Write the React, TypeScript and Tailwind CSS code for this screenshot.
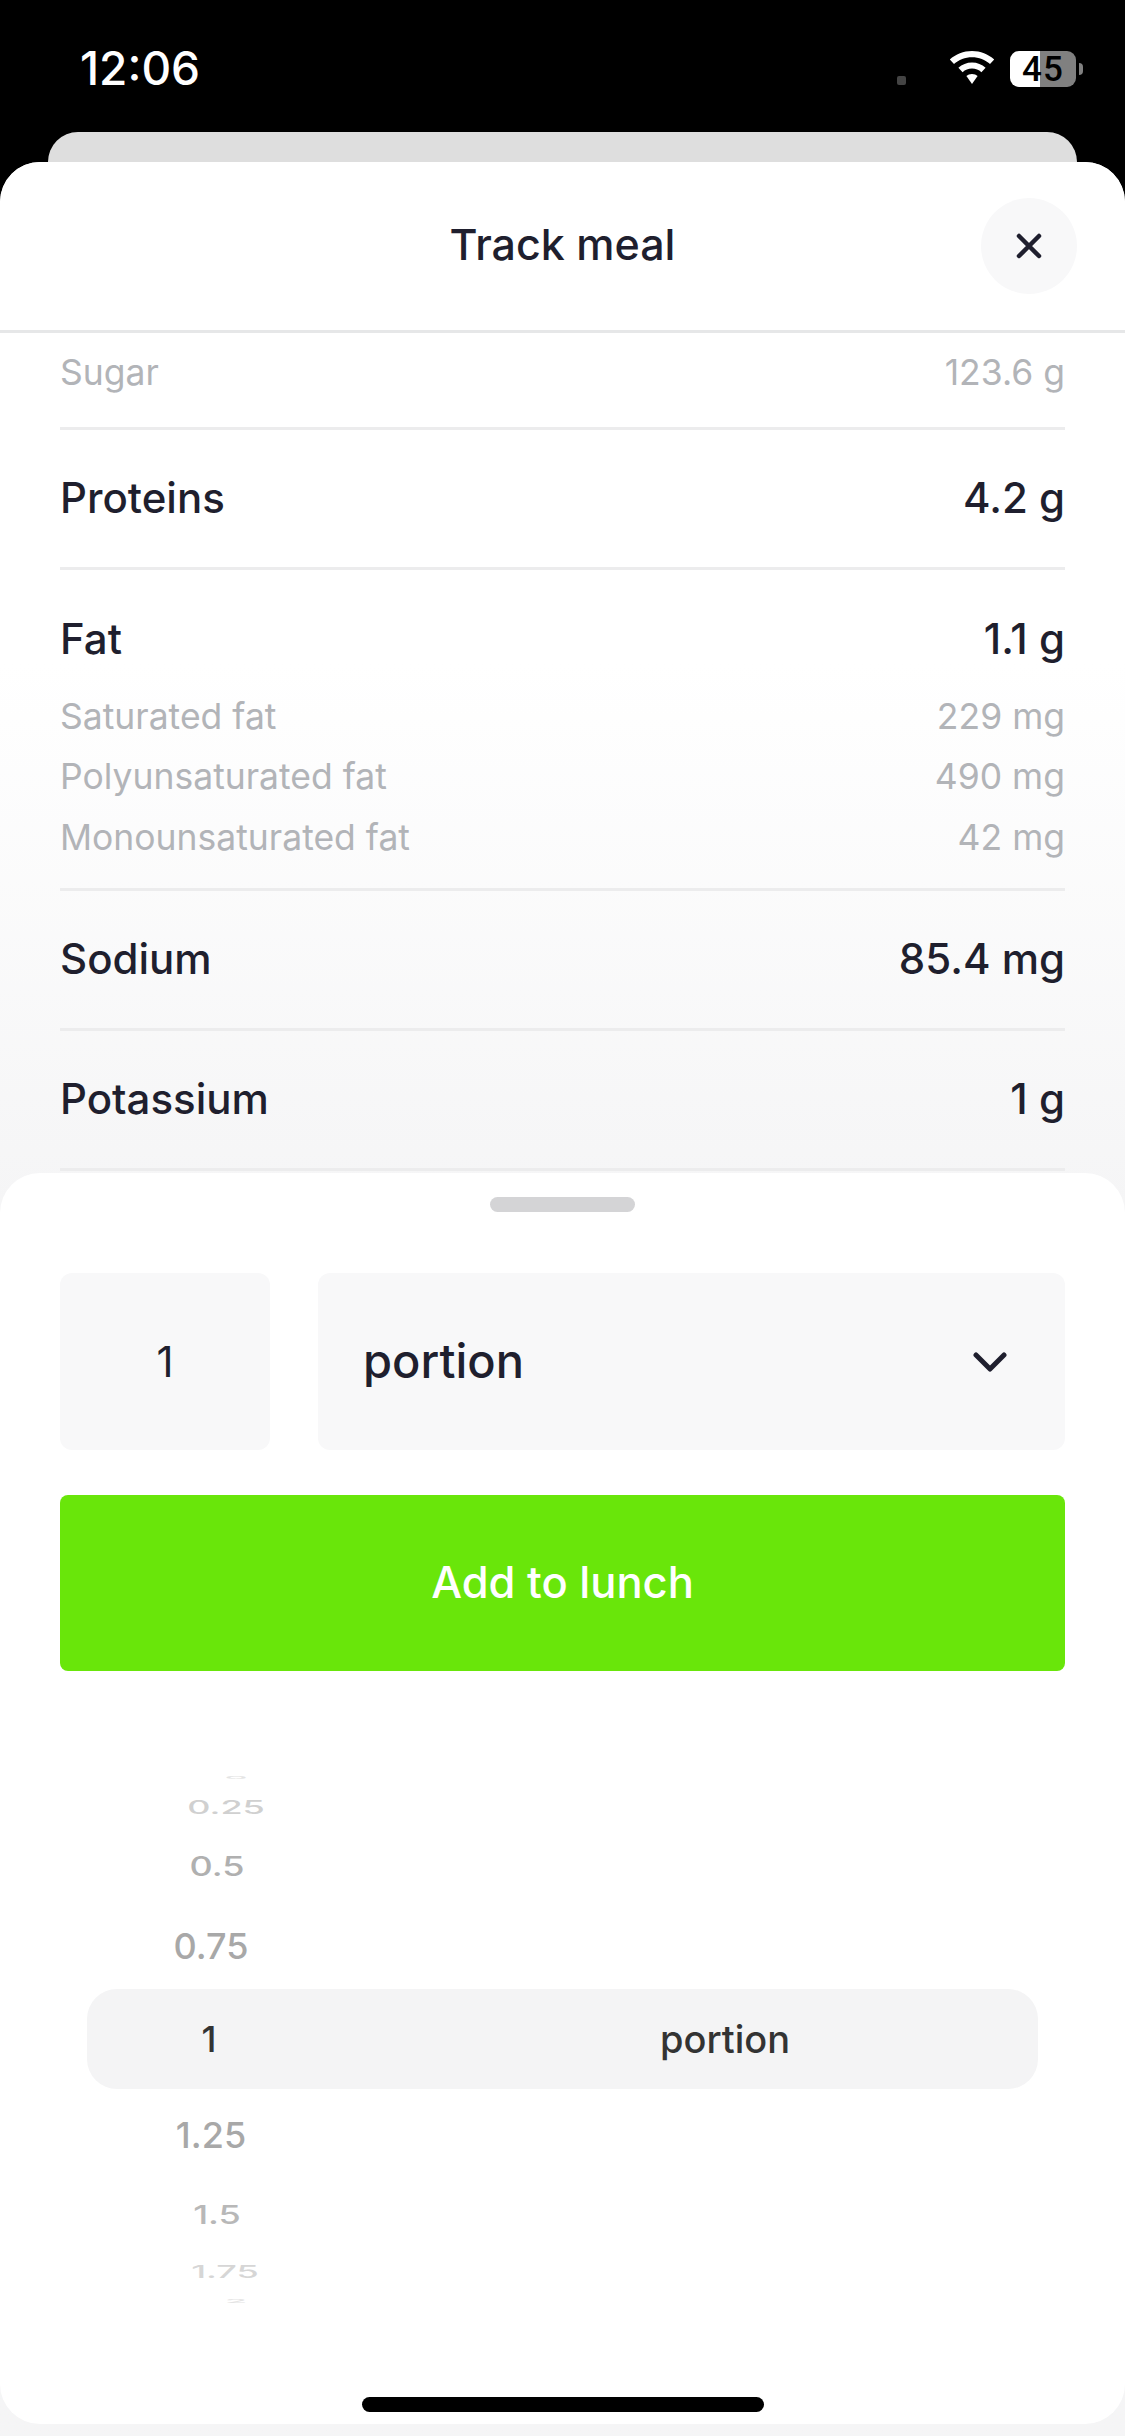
const rowBase = "flex items-center justify-between text-[#1f1f2e] text-[42px] font-medium pb-[3px]";
const subBase = "flex items-center justify-between h-[60.5px] text-[35.5px] text-[#b2b4b8]";

function Row({ label, value }: { label: string; value: string }) {
  return (
    <div className={`${rowBase} h-[140px] border-b-[3px] border-[#ececed]`}>
      <span>{label}</span>
      <span>{value}</span>
    </div>
  );
}

function Sub({ label, value }: { label: string; value: string }) {
  return (
    <div className={subBase}>
      <span>{label}</span>
      <span>{value}</span>
    </div>
  );
}

export default function App() {
  return (
    <div className="w-[1125px] h-[2436px] bg-black overflow-hidden flex flex-col font-['Inter',sans-serif]">
      {/* status bar */}
      <div className="h-[132px] shrink-0 flex items-start justify-between pl-[80px] pr-[42px] pt-[43px] text-white">
        <span className="text-[46px] leading-[50px] font-medium">12:06</span>
        <div className="flex items-start">
          <div className="w-[9px] h-[9px] rounded-[2px] bg-[#444444] mt-[33px] mr-[43px]" />
          <svg width="46" height="34" viewBox="0 0 46 34" className="mt-[8px] mr-[15px]">
            <path d="M23 0C14.5 0 6.8 3.2 0.8 8.5L5 13C9.8 8.8 16.1 6.2 23 6.2S36.2 8.8 41 13L45.2 8.5C39.2 3.2 31.5 0 23 0Z" fill="#fff" />
            <path d="M23 11.5C17.8 11.5 13 13.5 9.4 16.8L13.6 21.2C16.1 19 19.4 17.6 23 17.6S29.9 19 32.4 21.2L36.6 16.8C33 13.5 28.2 11.5 23 11.5Z" fill="#fff" />
            <path d="M23 23C20.8 23 18.8 23.8 17.4 25.1L23 33L28.6 25.1C27.2 23.8 25.2 23 23 23Z" fill="#fff" />
          </svg>
          <div className="relative w-[66px] h-[36px] mt-[8px] rounded-[9px] bg-[linear-gradient(90deg,#ffffff_0,#ffffff_45%,#808080_45%,#808080_100%)] flex items-center justify-center text-black text-[35px] leading-none font-medium tracking-[1px] font-['Roboto',sans-serif]">
            45
          </div>
          <div className="w-[4px] h-[12px] mt-[20px] ml-[3px] rounded-r-[4px] bg-[#808080]" />
        </div>
      </div>

      {/* sheet behind */}
      <div className="h-[70px] -mb-[40px] shrink-0 mx-[48px] rounded-t-[30px] bg-[#dedede]" />

      {/* main sheet */}
      <div className="relative flex-1 flex flex-col rounded-t-[40px] bg-gradient-to-b from-white from-[22%] to-[#f5f5f6] to-[46%]">
        <div className="relative h-[171px] shrink-0 flex items-center justify-center border-b-[3px] border-[#e6e7e8] bg-white rounded-t-[40px]">
          <span className="text-[43px] font-medium text-[#1f1f2e] -mt-[3px]">Track meal</span>
          <button className="absolute right-[48px] top-[36px] w-[96px] h-[96px] rounded-full bg-[#f8f8f9] flex items-center justify-center">
            <svg width="26" height="26" viewBox="0 0 26 26" fill="none" stroke="#1f1f2e" strokeWidth="4.5" strokeLinecap="round">
              <path d="M3 3L23 23M23 3L3 23" />
            </svg>
          </button>
        </div>

        {/* nutrition rows */}
        <div className="h-[840px] shrink-0 overflow-hidden px-[60px]">
          <div className="h-[97px] flex items-center justify-between border-b-[3px] border-[#ececed] text-[35.5px] text-[#b2b4b8]">
            <span className="-mt-[14px]">Sugar</span>
            <span className="-mt-[14px]">123.6 g</span>
          </div>
          <Row label="Proteins" value="4.2 g" />
          <div className="h-[321px] border-b-[3px] border-[#ececed]">
            <div className={`${rowBase} h-[140px] -mb-[24px]`}>
              <span>Fat</span>
              <span>1.1 g</span>
            </div>
            <Sub label="Saturated fat" value="229 mg" />
            <Sub label="Polyunsaturated fat" value="490 mg" />
            <Sub label="Monounsaturated fat" value="42 mg" />
          </div>
          <Row label="Sodium" value="85.4 mg" />
          <Row label="Potassium" value="1 g" />
        </div>

        {/* bottom panel */}
        <div className="h-[1251px] shrink-0 rounded-[40px] bg-white flex flex-col">
          <div className="w-[145px] h-[15px] mt-[24px] mx-auto rounded-full bg-[#d4d4d6]" />
          <div className="flex gap-[48px] mt-[61px] px-[60px]">
            <div className="w-[210px] h-[177px] rounded-[12px] bg-[#f8f8f9] flex items-center justify-center text-[42px] text-[#1f1f2e]">
              1
            </div>
            <div className="flex-1 h-[177px] rounded-[12px] bg-[#f8f8f9] flex items-center justify-between pl-[45px] pr-[58px] text-[47px] font-medium text-[#1f1f2e]">
              <span>portion</span>
              <svg width="34" height="20" viewBox="0 0 34 20" fill="none" stroke="#1f1f2e" strokeWidth="5" strokeLinecap="round" strokeLinejoin="round">
                <path d="M3 3L17 17L31 3" />
              </svg>
            </div>
          </div>
          <button className="mx-[60px] mt-[45px] h-[176px] rounded-[8px] bg-[#69e60a] text-white text-[43.5px] font-medium">
            Add to lunch
          </button>

          {/* picker */}
          <div className="mx-[87px] mt-[99px] flex flex-col font-medium text-[36px] text-[#a8a8a8]">
            <div className="h-[16px] flex items-center">
              <span className="ml-[99px] w-[100px] text-center text-[#e4e4e4] scale-y-[0.11]">0</span>
            </div>
            <div className="h-[42px] flex items-center">
              <span className="ml-[89px] w-[100px] text-center text-[#d0d0d0] scale-y-[0.5]">0.25</span>
            </div>
            <div className="h-[75px] flex items-center">
              <span className="ml-[80px] w-[100px] text-center text-[#b0b0b0] scale-y-[0.75]">0.5</span>
            </div>
            <div className="h-[86px] flex items-center">
              <span className="ml-[74px] w-[100px] text-center">0.75</span>
            </div>
            <div className="h-[100px] flex items-center rounded-[30px] bg-[#f4f4f5] text-[#333333]">
              <span className="ml-[72px] w-[100px] text-center">1</span>
              <span className="ml-[400px] w-[132px] text-center text-[38px]">portion</span>
            </div>
            <div className="h-[92px] flex items-center">
              <span className="ml-[74px] w-[100px] text-center">1.25</span>
            </div>
            <div className="h-[68px] flex items-center">
              <span className="ml-[80px] w-[100px] text-center text-[#b8b8b8] scale-y-[0.72]">1.5</span>
            </div>
            <div className="h-[46px] flex items-center">
              <span className="ml-[88px] w-[100px] text-center text-[#d6d6d6] scale-y-[0.47]">1.75</span>
            </div>
            <div className="h-[12px] flex items-center">
              <span className="ml-[99px] w-[100px] text-center text-[#e4e4e4] scale-y-[0.12]">2</span>
            </div>
          </div>

          <div className="mt-auto mb-[12px] mx-auto w-[402px] h-[15px] rounded-full bg-black" />
        </div>
      </div>
    </div>
  );
}
